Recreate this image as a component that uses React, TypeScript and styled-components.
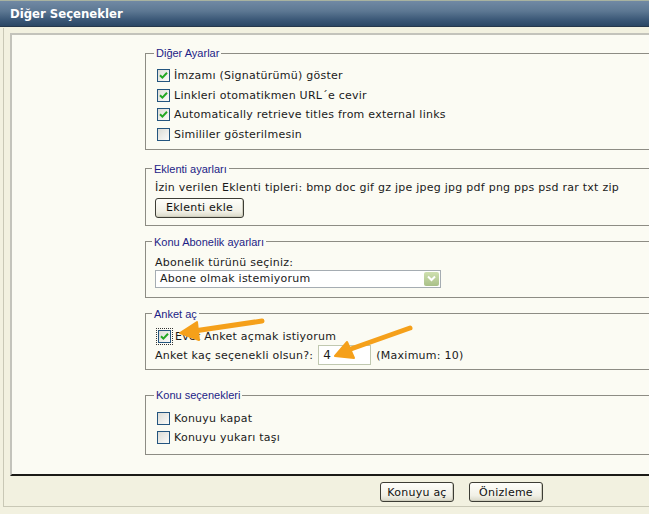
import React from "react";
import styled, { createGlobalStyle } from "styled-components";

const Global = createGlobalStyle`
  html, body { margin: 0; padding: 0; background: #f2f1e0; }
  body { font-family: "DejaVu Sans", Verdana, sans-serif; font-size: 11px; color: #1a1a1a; letter-spacing: 0.25px; }
`;

const Page = styled.div`
  position: relative;
  width: 649px;
  height: 514px;
  overflow: hidden;
  background: #f2f1e0;
`;

const Header = styled.div`
  height: 27px;
  box-sizing: border-box;
  border-top: 1px solid #a8b2a0;
  background: linear-gradient(#7189a4, #5d7893 40%, #3b5877 75%, #2b4765);
  border-bottom: 1px solid #26384c;
  color: #fff;
  font-weight: bold;
  font-size: 11.7px;
  letter-spacing: 0;
  display: flex;
  align-items: center;
  padding-left: 10px;
`;

const Outer = styled.div`
  margin: 1px 0 0 3px;
  height: 479px;
  border-left: 1px solid #c9c8b6;
  border-bottom: 1px solid #c9c8b6;
  padding: 5px 0 0 6px;
  box-sizing: border-box;
`;

const Inner = styled.div`
  height: 443px;
  box-sizing: border-box;
  background: #fbfbf3;
  border-top: 2px solid #c3c3bb;
  border-left: 2px solid #c3c3bb;
  border-bottom: 2px solid #1b1a16;
  overflow: hidden;
  padding: 12px 0 0 133px;
  display: flex;
  flex-direction: column;
`;

const Fieldset = styled.fieldset<{ $pad: string; $mt?: number; $gap?: number }>`
  margin: ${(p) => p.$mt ?? 0}px 0 0 0;
  width: 620px;
  border: 1px solid #8d8c84;
  border-right: none;
  padding: ${(p) => p.$pad};
  display: flex;
  flex-direction: column;
  gap: ${(p) => p.$gap ?? 4}px;
  min-width: 0;
`;

const Legend = styled.legend`
  font-family: "Liberation Sans", Arial, sans-serif;
  font-size: 11px;
  letter-spacing: 0;
  color: #1d1d86;
  padding: 0 2px;
  margin-left: -3px;
`;

const CheckRow = styled.label<{ $ml?: number }>`
  display: flex;
  align-items: center;
  gap: 4px;
  height: 15px;
  margin-left: ${(p) => p.$ml ?? 0}px;
`;

const Box = styled.span<{ $focus?: boolean }>`
  width: 11px;
  height: 11px;
  border: 1px solid #24557f;
  background: linear-gradient(135deg, #dcdcd6, #fbfbf9);
  display: inline-flex;
  align-items: center;
  justify-content: center;
  outline: ${(p) => (p.$focus ? "1px dotted #333" : "none")};
  outline-offset: 1px;
  flex: none;
`;

const Check = ({ checked, focus }: { checked?: boolean; focus?: boolean }) => (
  <Box $focus={focus}>
    {checked && (
      <svg width="9" height="9" viewBox="0 0 9 9">
        <path d="M1 4.2 L3.4 6.6 L8 1.8" fill="none" stroke="#22a722" strokeWidth="2" />
      </svg>
    )}
  </Box>
);

const Text = styled.span`
  white-space: nowrap;
`;

const Line = styled.div`
  display: flex;
  align-items: center;
  gap: 5px;
  white-space: nowrap;
`;

const Button = styled.button<{ $w: number }>`
  font-family: "DejaVu Sans", Verdana, sans-serif;
  font-size: 11px;
  letter-spacing: 0.25px;
  color: #111;
  width: ${(p) => p.$w}px;
  height: 20px;
  padding: 0;
  border: 1px solid #3d3d35;
  border-radius: 3px;
  background: linear-gradient(#fefefa, #f1f0e6 70%, #d9d8c8);
  box-shadow: inset -1px -1px 0 #cfcebe;
  cursor: pointer;
`;

const Select = styled.div`
  width: 286px;
  height: 18px;
  box-sizing: border-box;
  border: 1px solid #a5acb2;
  background: #fff;
  display: flex;
  align-items: center;
  justify-content: space-between;
  padding: 0 1px 0 4px;
`;

const Drop = styled.span`
  width: 15px;
  height: 14px;
  border-radius: 2px;
  background: linear-gradient(#cfe0b0, #a9c088);
  display: inline-flex;
  align-items: center;
  justify-content: center;
`;

const NumInput = styled.div`
  width: 53px;
  height: 20px;
  box-sizing: border-box;
  border: 1px solid #c0c8b0;
  background: #fff;
  padding-left: 4px;
  display: flex;
  align-items: center;
  font-size: 12px;
`;

const Footer = styled.div`
  display: flex;
  gap: 15px;
  padding: 6px 0 0 370px;
`;

const Arrows = styled.svg`
  position: absolute;
  left: 0;
  top: 0;
  pointer-events: none;
`;

export default function App() {
  return (
    <Page>
      <Global />
      <Header>Diğer Seçenekler</Header>
      <Outer>
        <Inner>
          <Fieldset $pad="9px 0 7px 11px" $gap={4.5}>
            <Legend>Diğer Ayarlar</Legend>
            <CheckRow>
              <Check checked />
              <Text>İmzamı (Signatürümü) göster</Text>
            </CheckRow>
            <CheckRow>
              <Check checked />
              <Text>Linkleri otomatikmen URL´e cevir</Text>
            </CheckRow>
            <CheckRow>
              <Check checked />
              <Text>Automatically retrieve titles from external links</Text>
            </CheckRow>
            <CheckRow>
              <Check />
              <Text>Simililer gösterilmesin</Text>
            </CheckRow>
          </Fieldset>

          <Fieldset $pad="6px 0 7px 9px" $mt={13}>
            <Legend>Eklenti ayarları</Legend>
            <Line>İzin verilen Eklenti tipleri: bmp doc gif gz jpe jpeg jpg pdf png pps psd rar txt zip</Line>
            <div>
              <Button $w={89}>Eklenti ekle</Button>
            </div>
          </Fieldset>

          <Fieldset $pad="8px 0 9px 9px" $mt={10} $gap={1}>
            <Legend>Konu Abonelik ayarları</Legend>
            <Line>Abonelik türünü seçiniz:</Line>
            <Select>
              <Text>Abone olmak istemiyorum</Text>
              <Drop>
                <svg width="9" height="7" viewBox="0 0 9 7">
                  <path d="M1 1.5 L4.5 5 L8 1.5" fill="none" stroke="#fff" strokeWidth="2" />
                </svg>
              </Drop>
            </Select>
          </Fieldset>

          <Fieldset $pad="9px 0 4px 9px" $mt={10} $gap={1.5}>
            <Legend>Anket aç</Legend>
            <CheckRow $ml={3}>
              <Check checked focus />
              <Text>Evet Anket açmak istiyorum</Text>
            </CheckRow>
            <Line>
              <span>Anket kaç seçenekli olsun?:</span>
              <NumInput>4</NumInput>
              <span>(Maximum: 10)</span>
            </Line>
          </Fieldset>

          <Fieldset $pad="10px 0 9px 11px" $mt={19} $gap={4}>
            <Legend>Konu seçenekleri</Legend>
            <CheckRow>
              <Check />
              <Text>Konuyu kapat</Text>
            </CheckRow>
            <CheckRow>
              <Check />
              <Text>Konuyu yukarı taşı</Text>
            </CheckRow>
          </Fieldset>
        </Inner>
        <Footer>
          <Button $w={74}>Konuyu aç</Button>
          <Button $w={74}>Önizleme</Button>
        </Footer>
      </Outer>
      <Arrows width="649" height="514" viewBox="0 0 649 514">
        <g fill="#f5a01a" stroke="#f5a01a" strokeLinecap="round" strokeLinejoin="round">
          <line x1="262" y1="321" x2="194" y2="331" strokeWidth="5" fill="none" />
          <polygon points="180,333 197,322 199,340" strokeWidth="2" />
          <line x1="410" y1="328" x2="348" y2="350" strokeWidth="5" fill="none" />
          <polygon points="335,356 347,342 354,358" strokeWidth="2" />
        </g>
      </Arrows>
    </Page>
  );
}
